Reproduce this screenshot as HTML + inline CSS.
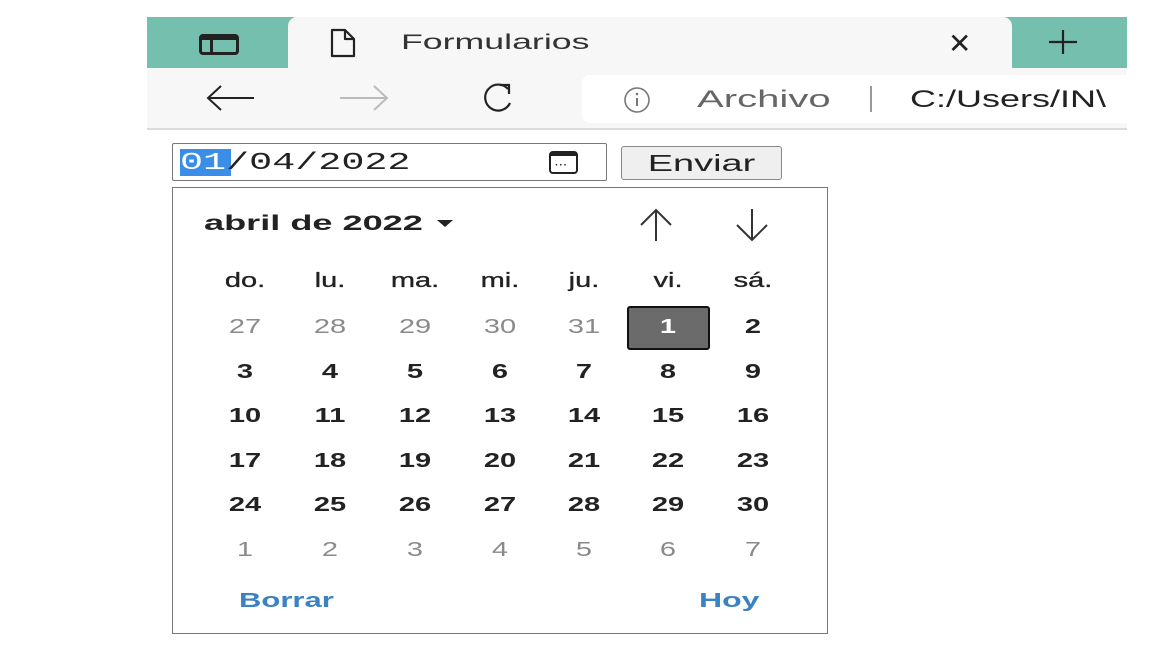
<!DOCTYPE html>
<html><head><meta charset="utf-8"><style>
*{margin:0;padding:0;box-sizing:border-box}
body{width:1152px;height:648px;background:#fff;position:relative;overflow:hidden;font-family:"Liberation Sans",sans-serif}
.a{position:absolute;white-space:nowrap}
.s{transform-origin:left center}
.d{position:absolute;width:60px;text-align:center;font-size:20px;color:#222;line-height:24px;font-weight:bold;transform:scaleX(1.45)}
.g{color:#8a8a8a;font-weight:normal}
.h{font-weight:normal;color:#222;-webkit-text-stroke:0.3px #222}
</style></head><body>
<div class="a" style="left:147px;top:17px;width:980px;height:51px;background:#75bfae"></div>
<div class="a" style="left:288px;top:17px;width:724px;height:51px;background:#f7f7f7;border-radius:9px 9px 0 0"></div>
<div class="a" style="left:147px;top:68px;width:980px;height:60px;background:#f7f7f7"></div>
<div class="a" style="left:147px;top:128px;width:980px;height:2px;background:#dcdcdc"></div>
<div class="a" style="left:582px;top:75px;width:545px;height:48px;background:#fff;border-radius:8px 0 0 8px"></div>
<div class="a" style="left:199px;top:34px;width:40px;height:21px;border:3px solid #222;border-top-width:6px;border-radius:4px"></div>
<div class="a" style="left:210px;top:37px;width:3px;height:16px;background:#222"></div>
<svg class="a" style="left:326px;top:27px" width="36" height="32" viewBox="0 0 36 32"><path d="M6 3h13l9 9v17H6z M19 3v9h9" fill="none" stroke="#222" stroke-width="2.2" stroke-linejoin="round"/></svg>
<div class="a s" style="left:401px;top:31px;font-size:21px;color:#333;transform:scaleX(1.7)">Formularios</div>
<div class="a" style="left:948px;top:27px;font-size:28px;color:#222">✕</div>
<svg class="a" style="left:1043px;top:27px" width="40" height="30"><path d="M20 3v24M6 15h28" stroke="#222" stroke-width="2.2"/></svg>
<svg class="a" style="left:205px;top:84px" width="52" height="28"><path d="M3 14h46M16 2L3 14l13 12" fill="none" stroke="#222" stroke-width="2"/></svg>
<svg class="a" style="left:338px;top:84px" width="52" height="28"><path d="M2 14h46M36 2l13 12-13 12" fill="none" stroke="#bbb" stroke-width="2"/></svg>
<svg class="a" style="left:470px;top:81px" width="54" height="34"><path d="M38 8A13 13 0 1 0 40 22" fill="none" stroke="#222" stroke-width="2.2"/><path d="M30 4h9v9" fill="none" stroke="#222" stroke-width="2.2"/></svg>
<svg class="a" style="left:622px;top:85px" width="30" height="30"><circle cx="15" cy="15" r="12" fill="none" stroke="#777" stroke-width="1.6"/><path d="M15 13v8" stroke="#777" stroke-width="2"/><circle cx="15" cy="9" r="1.3" fill="#777"/></svg>
<div class="a s" style="left:697px;top:86px;font-size:24px;color:#666;transform:scaleX(1.67)">Archivo</div>
<div class="a" style="left:870px;top:86px;width:2px;height:26px;background:#999"></div>
<div class="a s" style="left:910px;top:86px;font-size:24px;color:#222;transform:scaleX(1.5)">C:/Users/IN\</div>
<div class="a" style="left:1127px;top:0;width:25px;height:648px;background:#fff"></div>
<div class="a" style="left:172px;top:143px;width:435px;height:38px;border:1.5px solid #777;border-radius:2px"></div>
<div class="a" style="left:180px;top:149px;width:51px;height:27px;background:#3b8ee8"></div>
<div class="a s" style="left:180px;top:150px;font-family:'Liberation Mono',monospace;font-size:24px;color:#222;transform:scaleX(1.6)"><span style="color:#fff">01</span>/04/2022</div>
<div class="a" style="left:549px;top:151px;width:29px;height:23px;border:2px solid #222;border-top-width:5px;border-radius:4px"></div>
<div class="a" style="left:555px;top:161px;font-size:10px;color:#222;letter-spacing:1px;line-height:10px;font-weight:bold">···</div>
<div class="a" style="left:621px;top:146px;width:161px;height:34px;background:#efefef;border:1.5px solid #888;border-radius:3px"></div>
<div class="a" style="left:621px;top:147px;width:161px;height:34px;font-size:23px;color:#222;text-align:center;line-height:33px;transform:scaleX(1.65)">Enviar</div>
<div class="a" style="left:172px;top:187px;width:656px;height:447px;border:1.5px solid #777;background:#fff"></div>
<div class="a s" style="left:204px;top:212px;font-size:21px;font-weight:bold;color:#222;transform:scaleX(1.72)">abril de 2022</div>
<svg class="a" style="left:436px;top:219px" width="20" height="10"><path d="M1 1h16l-8 7z" fill="#222"/></svg>
<svg class="a" style="left:632px;top:207px" width="48" height="36"><path d="M24 34V3M9 18L24 3l15 15" fill="none" stroke="#333" stroke-width="2"/></svg>
<svg class="a" style="left:728px;top:207px" width="48" height="36"><path d="M24 2v31M9 18l15 15 15-15" fill="none" stroke="#333" stroke-width="2"/></svg>
<div class="a" style="left:627px;top:306px;width:83px;height:44px;background:#6b6b6b;border:2.5px solid #111;border-radius:3px"></div>
<div id="cal"></div>
<div class="a s" style="left:239px;top:590px;font-size:20px;color:#3b82c4;font-weight:bold;transform:scaleX(1.55)">Borrar</div>
<div class="a s" style="left:699px;top:590px;font-size:20px;color:#3b82c4;font-weight:bold;transform:scaleX(1.6)">Hoy</div>
<script>
var xs=[245,330,415,500,584,668,753],ys=[281,327,372,416,461,505,550];
var hd=["do.","lu.","ma.","mi.","ju.","vi.","sá."];
var rows=[["27","28","29","30","31","1","2"],["3","4","5","6","7","8","9"],["10","11","12","13","14","15","16"],["17","18","19","20","21","22","23"],["24","25","26","27","28","29","30"],["1","2","3","4","5","6","7"]];
var h="";
for(var i=0;i<7;i++)h+='<div class="d h" style="left:'+(xs[i]-30)+'px;top:'+(ys[0]-12)+'px">'+hd[i]+'</div>';
for(var r=0;r<6;r++)for(var i=0;i<7;i++){var g=(r==0&&i<5)||r==5;var c=r==0&&i==5?'color:#fff;':'';h+='<div class="d'+(g?' g':'')+'" style="'+c+'left:'+(xs[i]-30)+'px;top:'+(ys[r+1]-12)+'px">'+rows[r][i]+'</div>';}
document.getElementById("cal").innerHTML=h;
</script>
</body></html>
